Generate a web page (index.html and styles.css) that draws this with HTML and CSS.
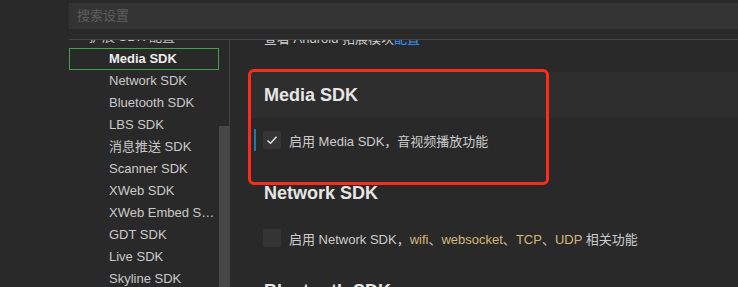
FILE: index.html
```html
<!DOCTYPE html>
<html lang="zh-CN">

<head>
    <meta charset="UTF-8">
    <title>设置</title>
    <link rel="stylesheet" href="styles.css">
</head>

<body>
    <div class="app">
        <div class="rail"></div>
        <div class="main">
            <div class="search-wrap">
                <div class="search">搜索设置</div>
            </div>
            <div class="panes">
                <div class="tree">
                    <ul class="tree-list">
                        <li class="tree-item parent">扩展 SDK 配置</li>
                        <li class="tree-item selected">Media SDK</li>
                        <li class="tree-item">Network SDK</li>
                        <li class="tree-item">Bluetooth SDK</li>
                        <li class="tree-item">LBS SDK</li>
                        <li class="tree-item">消息推送 SDK</li>
                        <li class="tree-item">Scanner SDK</li>
                        <li class="tree-item">XWeb SDK</li>
                        <li class="tree-item">XWeb Embed SDK</li>
                        <li class="tree-item">GDT SDK</li>
                        <li class="tree-item">Live SDK</li>
                        <li class="tree-item">Skyline SDK</li>
                    </ul>
                    <div class="scrollbar">
                        <div class="thumb"></div>
                    </div>
                </div>
                <div class="content">
                    <div class="desc">查看 Android 拓展模块<span class="link">配置</span></div>

                    <div class="section highlighted">
                        <div class="section-title">Media SDK</div>
                        <div class="setting-row">
                            <div class="setting active">
                                <span class="checkbox checked">
                                    <svg width="12" height="12" viewBox="0 0 12 12"><path d="M1.5 6.5 L4.5 9.2 L10.5 2.8" fill="none" stroke="#e2e2e2" stroke-width="1.5"/></svg>
                                </span>
                                <span class="label">启用 Media SDK，音视频播放功能</span>
                            </div>
                        </div>
                    </div>

                    <div class="section">
                        <div class="section-title">Network SDK</div>
                        <div class="setting-row">
                            <div class="setting">
                                <span class="checkbox"></span>
                                <span class="label">启用 Network SDK，<span class="code">wifi</span>、<span class="code">websocket</span>、<span class="code">TCP</span>、<span class="code">UDP</span> 相关功能</span>
                            </div>
                        </div>
                    </div>

                    <div class="section">
                        <div class="section-title">Bluetooth SDK</div>
                    </div>
                </div>
            </div>
        </div>
    </div>
</body>

</html>
```

FILE: styles.css
```css
html, body {
    margin: 0;
    padding: 0;
    background: #292929;
    font-family: 'Liberation Sans', 'Noto Sans CJK SC', sans-serif;
    color: #cccccc;
}

.app {
    display: flex;
    height: 287px;
    overflow: hidden;
}

.rail {
    width: 69px;
    flex-shrink: 0;
}

.main {
    flex: 1;
    display: flex;
    flex-direction: column;
    min-width: 0;
}

.search-wrap {
    padding: 3px 0 10px;
}

.search {
    height: 26px;
    line-height: 26px;
    background: #343434;
    padding-left: 8px;
    font-size: 13px;
    color: #5e5e5e;
}

.panes {
    flex: 1;
    display: flex;
    border-top: 1px solid #454545;
    overflow: hidden;
}

.tree {
    width: 160px;
    flex-shrink: 0;
    display: flex;
    border-right: 1px solid #434343;
    overflow: hidden;
}

.tree-list {
    list-style: none;
    margin: -14px 0 0;
    padding: 0;
    width: 150px;
}

.tree-item {
    height: 20px;
    line-height: 20px;
    border: 1px solid transparent;
    padding: 0 1px 0 39px;
    font-size: 13px;
    color: #c9c9c9;
    white-space: nowrap;
    overflow: hidden;
    text-overflow: ellipsis;
}

.tree-item.parent {
    padding-left: 19px;
}

.tree-item.selected {
    border-color: #45a24c;
    color: #ececec;
    font-weight: 700;
}

.scrollbar {
    width: 10px;
    padding-top: 86px;
    display: flex;
    flex-direction: column;
}

.thumb {
    flex: 1;
    background: #474747;
}

.content {
    flex: 1;
    padding-left: 18px;
    overflow: hidden;
}

.desc {
    margin-top: -11px;
    padding-left: 16px;
    height: 20px;
    line-height: 20px;
    font-size: 13px;
    color: #cccccc;
    margin-bottom: 23px;
}

.link {
    color: #3794ff;
}

.section {
    position: relative;
}

.section-title {
    height: 46px;
    line-height: 46px;
    padding-left: 16px;
    font-size: 18px;
    font-weight: 700;
    color: #e6e6e6;
}

.section.highlighted .section-title {
    background: #2e2e2e;
}

/* red annotation frame drawn over the first section */
.section.highlighted::after {
    content: "";
    position: absolute;
    left: 0;
    top: -3px;
    width: 301px;
    bottom: -15px;
    border: 3px solid #ff2a17;
    border-radius: 6px;
    box-sizing: border-box;
}

.setting-row {
    padding: 11px 0 19px 6px;
}

.setting {
    display: flex;
    align-items: center;
    height: 22px;
    border-left: 2px solid transparent;
    padding-left: 7px;
    font-size: 13px;
}

.setting.active {
    border-left-color: #1c7aaa;
}

.checkbox {
    width: 18px;
    height: 18px;
    background: #353535;
    border-radius: 2px;
    display: flex;
    align-items: center;
    justify-content: center;
    margin-right: 8px;
}

.label {
    color: #cccccc;
    white-space: nowrap;
}

.code {
    color: #d5b878;
}
```
